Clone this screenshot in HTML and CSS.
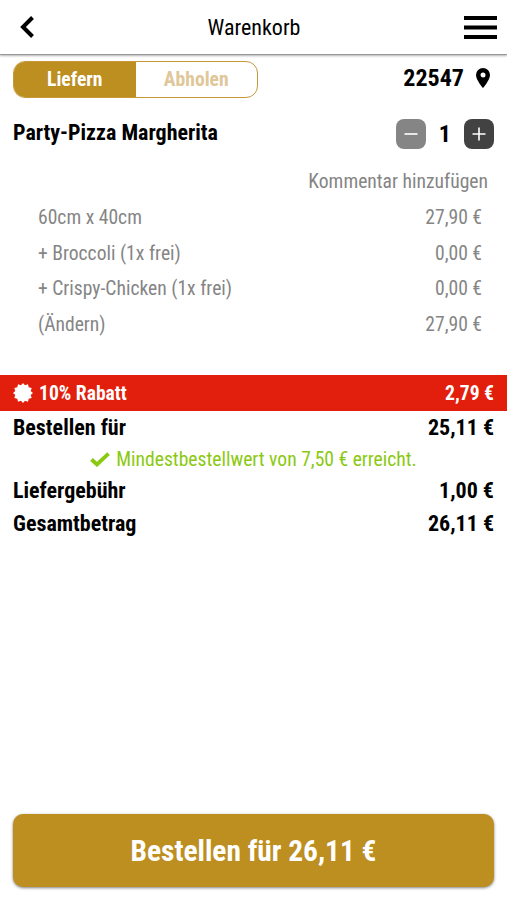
FILE: index.html
```html
<!DOCTYPE html>
<html lang="de">

<head>
    <meta charset="UTF-8">
    <title>Warenkorb</title>
    <link rel="stylesheet" href="styles.css">
</head>

<body>
    <header class="topbar">
        <svg class="back" viewBox="0 0 14 22">
            <path d="M12.5 1.5 3 11l9.5 9.5" />
        </svg>
        <h1>Warenkorb</h1>
        <svg class="menu" viewBox="0 0 33 23">
            <path d="M0 2h33M0 11.5h33M0 21h33" />
        </svg>
    </header>

    <main>
        <div class="delivery">
            <div class="switch">
                <div class="option selected">Liefern</div>
                <div class="option">Abholen</div>
            </div>
            <div class="zip">
                <span>22547</span>
                <svg class="pin" viewBox="0 0 14 20">
                    <path fill-rule="evenodd"
                        d="M7 0a7 7 0 0 0-7 7c0 5 7 13 7 13s7-8 7-13a7 7 0 0 0-7-7zm0 4.5a2.5 2.5 0 1 1 0 5 2.5 2.5 0 0 1 0-5z" />
                </svg>
            </div>
        </div>

        <div class="item">
            <span class="name">Party-Pizza Margherita</span>
            <div class="quantity">
                <button class="minus"><svg viewBox="0 0 30 30"><path d="M8.5 15h13" /></svg></button>
                <span>1</span>
                <button class="plus"><svg viewBox="0 0 30 30"><path d="M8.5 15h13M15 8.5v13" /></svg></button>
            </div>
        </div>

        <div class="comment">Kommentar hinzufügen</div>

        <div class="details">
            <div class="row"><span>60cm x 40cm</span><span>27,90 €</span></div>
            <div class="row"><span>+ Broccoli (1x frei)</span><span>0,00 €</span></div>
            <div class="row"><span>+ Crispy-Chicken (1x frei)</span><span>0,00 €</span></div>
            <div class="row"><span>(Ändern)</span><span>27,90 €</span></div>
        </div>

        <div class="discount">
            <svg class="badge" viewBox="-10 -10 20 20">
                <path d="M0-10 2-7.7 5-8.7 5.7-5.7 8.7-5 7.7-2 10 0 7.7 2 8.7 5 5.7 5.7 5 8.7 2 7.7 0 10-2 7.7-5 8.7-5.7 5.7-8.7 5-7.7 2-10 0-7.7-2-8.7-5-5.7-5.7-5-8.7-2-7.7z" />
            </svg>
            <span>10% Rabatt</span>
            <span class="price">2,79 €</span>
        </div>

        <div class="total"><span>Bestellen für</span><span>25,11 €</span></div>
        <div class="minimum">
            <svg class="check" viewBox="0 0 20 15">
                <path d="M1.5 7.5 7 12.5 18.5 1.7" />
            </svg>
            <span>Mindestbestellwert von 7,50 € erreicht.</span>
        </div>
        <div class="total"><span>Liefergebühr</span><span>1,00 €</span></div>
        <div class="total"><span>Gesamtbetrag</span><span>26,11 €</span></div>
    </main>

    <button class="order">Bestellen für 26,11 €</button>
</body>

</html>
```
FILE: styles.css
```css
* {
    box-sizing: border-box;
}

body {
    margin: 0;
    height: 100vh;
    display: flex;
    flex-direction: column;
    background: #fff;
    color: #000;
    font-family: "Roboto Condensed", Roboto, sans-serif;
    font-stretch: 75%;
    font-size: 19.6px;
    white-space: nowrap;
    overflow: hidden;
}

button {
    border: none;
    padding: 0;
    font: inherit;
    font-stretch: 75%;
    cursor: pointer;
}

.topbar {
    height: 55px;
    flex: none;
    display: flex;
    align-items: center;
    justify-content: space-between;
    padding: 0 10px 0 20px;
    border-bottom: 1px solid #999;
    box-shadow: 0 1px 2px rgba(0, 0, 0, 0.3);
}

.topbar h1 {
    margin: 0 0 0 10px;
    font-size: 22px;
    font-weight: 400;
}

.topbar svg {
    fill: none;
    stroke: #000;
    stroke-width: 4;
}

.back {
    width: 14px;
    height: 22px;
}

.menu {
    width: 33px;
    height: 23px;
}

main {
    flex: 1;
}

.delivery {
    display: flex;
    align-items: center;
    justify-content: space-between;
    padding: 6px 17px 0 13px;
}

.switch {
    display: flex;
    width: 245px;
    height: 37px;
    border: 1px solid #c6983a;
    border-radius: 12px;
    overflow: hidden;
}

.option {
    flex: 1;
    display: flex;
    align-items: center;
    justify-content: center;
    padding-bottom: 1px;
    color: #e0c799;
    font-weight: 700;
}

.selected {
    background: #bd8e20;
    color: #fff;
}

.zip {
    display: flex;
    align-items: center;
    gap: 12px;
    padding-bottom: 3px;
    font-size: 24px;
    font-weight: 700;
}

.pin {
    width: 14px;
    height: 20px;
}

.item {
    display: flex;
    align-items: center;
    justify-content: space-between;
    height: 72px;
    padding: 0 13px;
    font-size: 22px;
    font-weight: 700;
}

.name {
    padding-bottom: 4px;
}

.quantity {
    display: flex;
    align-items: center;
    gap: 13px;
    font-size: 24px;
}

.quantity button {
    width: 30px;
    height: 30px;
    border-radius: 8px;
    background: #424242;
}

.quantity .minus {
    background: #858585;
}

.quantity svg {
    display: block;
    stroke: #fff;
    stroke-width: 1.6;
}

.comment {
    margin-top: -3px;
    padding-right: 19px;
    line-height: 29px;
    text-align: right;
    color: #858585;
}

.details {
    padding: 4px 25px 33px 38px;
    color: #858585;
}

.row {
    display: flex;
    justify-content: space-between;
    line-height: 35.5px;
}

.discount {
    display: flex;
    align-items: center;
    gap: 6px;
    height: 36px;
    padding: 0 13px;
    background: #e21e0c;
    color: #fff;
    font-weight: 700;
}

.badge {
    width: 20px;
    height: 20px;
    fill: #fff;
}

.price {
    margin-left: auto;
}

.total {
    display: flex;
    justify-content: space-between;
    padding: 0 13px;
    font-size: 22px;
    font-weight: 700;
    line-height: 33px;
}

.minimum {
    display: flex;
    align-items: center;
    justify-content: center;
    gap: 6px;
    height: 30px;
    color: #8ac911;
}

.check {
    width: 20px;
    height: 15px;
    fill: none;
    stroke: #8ac911;
    stroke-width: 3.8;
}

.order {
    flex: none;
    height: 73px;
    margin: 0 13px 13px;
    border-radius: 10px;
    background: #bd8e20;
    color: #fff;
    font-size: 29.4px;
    font-weight: 700;
    box-shadow: 0 1px 3px rgba(0, 0, 0, 0.5);
}
```
